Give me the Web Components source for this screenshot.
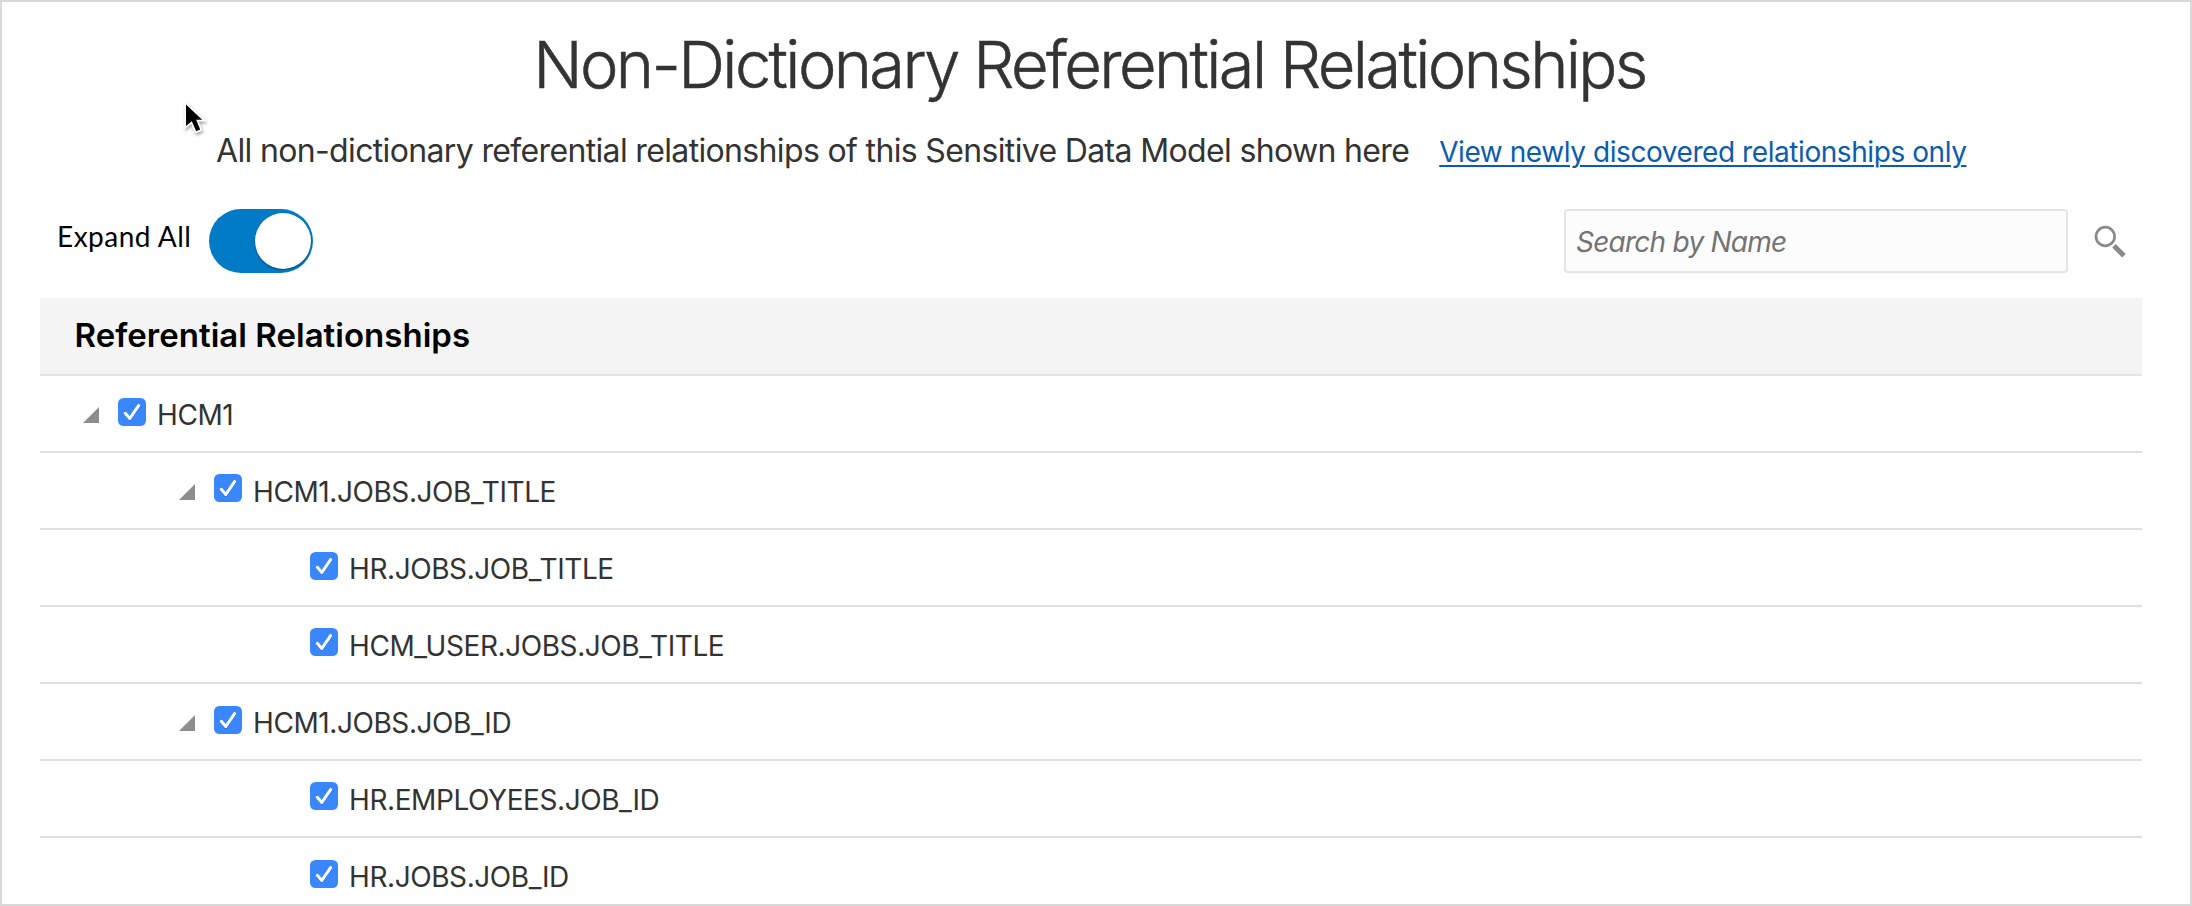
<!DOCTYPE html>
<html lang="en">
<head>
<meta charset="utf-8">
<title>Non-Dictionary Referential Relationships</title>
<style>
body { margin: 0; background: #fff; }
</style>
</head>
<body>
<relationship-page></relationship-page>
<script>
const define = (name, html, init) => customElements.define(name, class extends HTMLElement {
  constructor() {
    super();
    const t = document.createElement('template');
    t.innerHTML = html;
    this.attachShadow({ mode: 'open' }).append(t.content.cloneNode(true));
  }
  connectedCallback() { if (init) init(this); }
});

define('mouse-pointer', `
<style>:host { display: block; width: 30px; height: 38px; } svg { display: block; overflow: visible; filter: drop-shadow(1px 2px 1.5px rgba(0,0,0,.35)); }</style>
<svg width="30" height="38" viewBox="0 0 30 38"><path d="M5 4.5V26L10.8 21.3L15.2 31.3L19.2 29.6L15.2 19.8H21.2Z" fill="#000" stroke="#fff" stroke-width="3.4" paint-order="stroke"/></svg>`);

define('toggle-switch', `
<style>
:host { display: flex; justify-content: flex-end; box-sizing: border-box; width: 104px; height: 64px; padding: 4px 2px; border-radius: 32px; background: #027bc7; }
i { width: 56px; height: 56px; border-radius: 50%; background: #fff; box-shadow: 0 1px 2px rgba(0,0,0,.45); }
</style><i></i>`);

define('search-box', `
<style>
:host { display: flex; align-items: center; }
div { box-sizing: border-box; width: 504px; height: 64px; border: 2px solid #e4e4e4; border-radius: 4px; background: #fcfcfc; padding-left: 10px; font: italic 28px/62px Inter, sans-serif; letter-spacing: -0.75px; color: #737373; white-space: nowrap; }
svg { display: block; margin: 2px 0 0 24px; }
</style>
<div>Search by Name</div>
<svg width="36" height="36" viewBox="0 0 36 36" fill="none" stroke="#8a8a8a"><circle cx="13.3" cy="12.5" r="9.3" stroke-width="2.7"/><path d="M22 21.8L32 31.8" stroke-width="5"/></svg>`);

define('check-mark', `
<style>:host { display: block; width: 28px; height: 28px; } svg { display: block; }</style>
<svg width="28" height="28" viewBox="0 0 28 28"><rect width="28" height="28" rx="5.5" fill="#3a87fd"/><path d="M7.3 15.3L11.8 20.5L20.6 7.6" fill="none" stroke="#1d63cc" stroke-opacity=".5" stroke-width="3" stroke-linecap="round" stroke-linejoin="round" transform="translate(0 1)"/><path d="M7.3 15.3L11.8 20.5L20.6 7.6" fill="none" stroke="#fff" stroke-width="3" stroke-linecap="round" stroke-linejoin="round"/></svg>`);

define('tree-row', `
<style>
:host { display: flex; box-sizing: border-box; height: 77px; border-bottom: 2px solid #e0e0e0; padding-left: calc(43px + var(--level, 0) * 96px); font: 28px/34px Inter, sans-serif; letter-spacing: -0.42px; color: #333; }
.arrow { width: 16px; height: 16px; margin-top: 31px; background: #8c8d8f; clip-path: polygon(100% 0, 100% 100%, 0 100%); }
:host([leaf]) .arrow { visibility: hidden; }
check-mark { margin: calc(22px - var(--lift, 0px)) 11px 0 19px; }
span { padding-top: 22px; white-space: nowrap; }
</style>
<i class="arrow"></i><check-mark></check-mark><span><slot></slot></span>`, el => {
  el.style.setProperty('--level', el.getAttribute('level') || 0);
});

define('relationship-tree', `
<style>
:host { display: block; }
header { box-sizing: border-box; height: 78px; border-bottom: 2px solid #e4e4e4; background: #f4f4f4; padding: 17px 0 0 34.5px; font: 600 33px/40px Inter, sans-serif; letter-spacing: .03px; color: #000; }
::slotted(tree-row:nth-child(even)) { --lift: 1px; }
</style>
<header>Referential Relationships</header><slot></slot>`);

define('relationship-page', `
<style>
:host { display: block; position: relative; box-sizing: border-box; width: 2192px; height: 906px; overflow: hidden; border: 2px solid #d9d9d9; padding: 0 48px 0 38px; font-family: Inter, sans-serif; color: #333; }
h1 { margin: 0; padding: 23px 3px 0 0; text-align: center; font-weight: 300; font-size: 65px; line-height: 80px; letter-spacing: -2.64px; -webkit-text-stroke: .5px #333; white-space: nowrap; }
.sub { display: flex; align-items: baseline; margin: 26px 0 0 176px; font-size: 32px; line-height: 40px; letter-spacing: -0.65px; white-space: nowrap; }
a { margin-left: 30px; color: #0b5cad; font-size: 28px; letter-spacing: -0.43px; text-decoration: underline; text-decoration-thickness: 2px; text-underline-offset: 3px; }
.bar { display: flex; align-items: center; height: 64px; margin: 37px 0 25px; }
.label { margin: -10px 17.6px 0 17px; font: 28px/34px Lato, sans-serif; letter-spacing: .5px; color: #000; }
search-box { margin-left: auto; margin-right: 14px; }
mouse-pointer { position: absolute; left: 179px; top: 98px; }
</style>
<h1>Non-Dictionary Referential Relationships</h1>
<div class="sub"><span>All non-dictionary referential relationships of this Sensitive Data Model shown here</span><a>View newly discovered relationships only</a></div>
<div class="bar"><span class="label">Expand All</span><toggle-switch></toggle-switch><search-box></search-box></div>
<relationship-tree>
<tree-row>HCM1</tree-row>
<tree-row level="1">HCM1.JOBS.JOB_TITLE</tree-row>
<tree-row level="2" leaf>HR.JOBS.JOB_TITLE</tree-row>
<tree-row level="2" leaf>HCM_USER.JOBS.JOB_TITLE</tree-row>
<tree-row level="1">HCM1.JOBS.JOB_ID</tree-row>
<tree-row level="2" leaf>HR.EMPLOYEES.JOB_ID</tree-row>
<tree-row level="2" leaf>HR.JOBS.JOB_ID</tree-row>
</relationship-tree>
<mouse-pointer></mouse-pointer>`);
</script>
</body>
</html>
